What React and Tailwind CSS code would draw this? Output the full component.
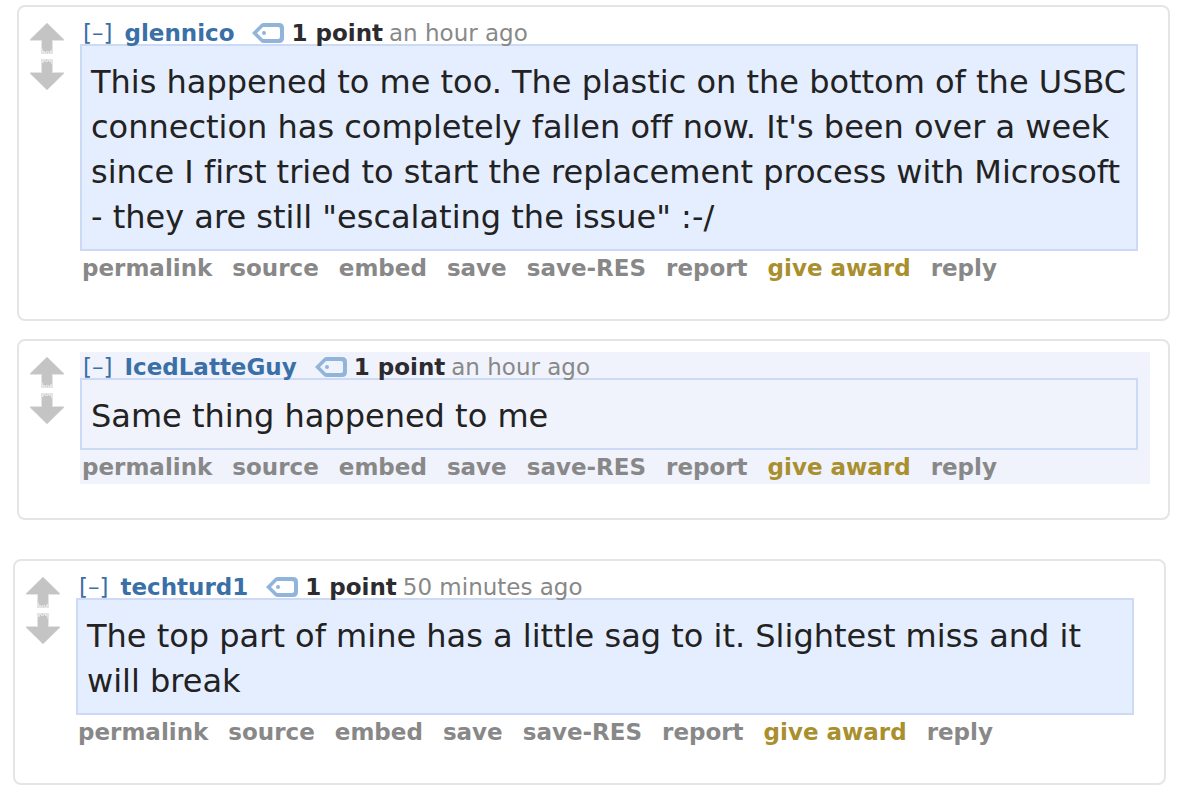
import React, { useState } from 'react';

const comments = [
    {
        id: 1,
        author: 'glennico',
        age: 'an hour ago',
        text: 'This happened to me too. The plastic on the bottom of the USBC connection has completely fallen off now. It\'s been over a week since I first tried to start the replacement process with Microsoft - they are still "escalating the issue" :-/',
        card: 'ml-[17px] mr-[15px] mt-[5px]',
        entry: '',
        body: 'bg-[#e5eeff]',
    },
    {
        id: 2,
        author: 'IcedLatteGuy',
        age: 'an hour ago',
        text: 'Same thing happened to me',
        card: 'ml-[17px] mr-[15px] mt-[18px]',
        entry: 'bg-[#f0f3fc]',
        body: '',
    },
    {
        id: 3,
        author: 'techturd1',
        age: '50 minutes ago',
        text: 'The top part of mine has a little sag to it. Slightest miss and it will break',
        card: 'ml-[13px] mr-[19px] mt-[39px]',
        entry: '',
        body: 'bg-[#e5eeff]',
    },
];

const actions = ['permalink', 'source', 'embed', 'save', 'save-RES', 'report', 'give award', 'reply'];

function VoteArrow({ down }) {
    return (
        <svg width="34" height="31" viewBox="0 0 34 31" className={down ? 'rotate-180' : ''} aria-hidden="true">
            <path d="M17 0L34 16V18H23V31H11V18H0V16Z" fill="#e4e4e4" />
            <path d="M17 0L34 17H22V25L20 28H14L12 25V17H0Z" fill="#c4c4c4" />
            <path d="M13 27h1v1h-1zM15 28h1v1h-1zM17 29h1v1h-1zM19 28h1v1h-1zM21 26h1v1h-1z" fill="#c4c4c4" />
        </svg>
    );
}

function TagIcon() {
    return (
        <svg width="32" height="20" viewBox="0 0 32 20" aria-hidden="true">
            <path
                d="M0 10L9 1Q10 0 12 0H27Q32 0 32 5V15Q32 20 27 20H12Q10 20 9 19ZM5 10L11 16H26Q28 16 28 14V6Q28 4 26 4H11Z"
                fill="#91b4db"
                fillRule="evenodd"
            />
            <circle cx="12" cy="10" r="2" fill="#91b4db" />
        </svg>
    );
}

function Comment({ comment }) {
    const [collapsed, setCollapsed] = useState(false);

    return (
        <article className={`flex gap-4 rounded-lg border-2 border-[#e5e5e5] pt-[11px] pr-[18px] pb-[34px] pl-[11px] ${comment.card}`}>
            {/* Votes */}
            <div className="flex shrink-0 flex-col gap-[5px] pt-[5px]">
                <button type="button" aria-label="upvote"><VoteArrow /></button>
                <button type="button" aria-label="downvote"><VoteArrow down /></button>
            </div>

            <div className={`min-w-0 flex-1 ${comment.entry}`}>
                {/* Tagline */}
                <div className="flex h-[26px] items-center pt-1 pl-[3px] text-[23px] leading-[26px] whitespace-nowrap text-[#888]">
                    <button type="button" onClick={() => setCollapsed(!collapsed)} className="text-[#3a6fa7]">
                        {collapsed ? '[+]' : '[–]'}
                    </button>
                    <a href="#user" className="ml-3 font-bold text-[#3a6fa7]">{comment.author}</a>
                    <button type="button" aria-label="tag user" className="ml-[18px]"><TagIcon /></button>
                    <span className="ml-[7px] font-bold text-[#2b2b30]">1 point</span>
                    <time className="ml-[6px]">{comment.age}</time>
                </div>

                {!collapsed && (
                    <>
                        <div className={`mr-3 border-2 border-[#ccdaf5] pt-[14px] pr-2 pb-[9px] pl-[9px] ${comment.body}`}>
                            <p className="text-[32px] leading-[45px] text-[#222] [font-variant-ligatures:none]">{comment.text}</p>
                        </div>

                        {/* Actions */}
                        <ul className="flex h-[34px] gap-5 pl-[2px] text-[23px] leading-[34px] font-bold whitespace-nowrap text-[#888]">
                            {actions.map(action => (
                                <li key={action}>
                                    <a href="#action" className={action === 'give award' ? 'text-[#a98f2d]' : ''}>{action}</a>
                                </li>
                            ))}
                        </ul>
                    </>
                )}
            </div>
        </article>
    );
}

function App() {
    return (
        <main className="flow-root min-h-screen bg-white pb-5 font-['Verdana','DejaVu_Sans',sans-serif]">
            {comments.map(comment => <Comment key={comment.id} comment={comment} />)}
        </main>
    );
}

export default App;
